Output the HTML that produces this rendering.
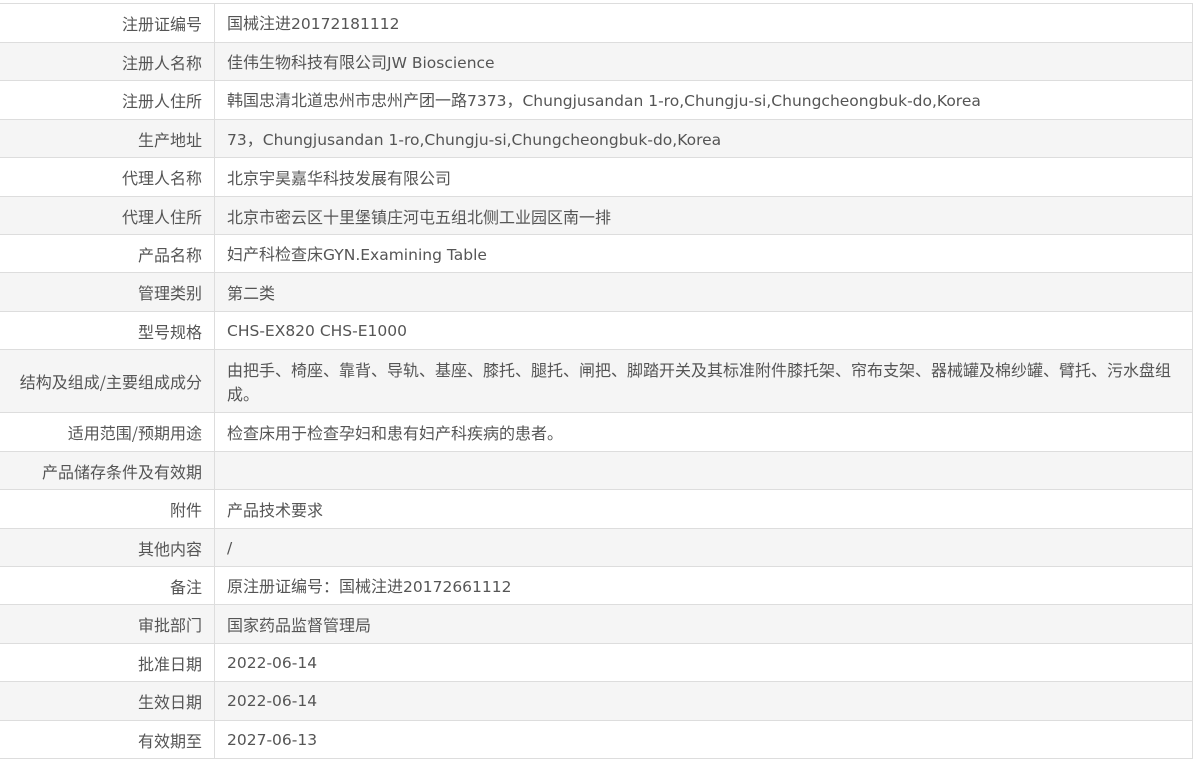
<!DOCTYPE html>
<html><head><meta charset="utf-8"><style>
body{margin:0;background:#fff;}
table{position:absolute;left:0;top:3px;width:1193px;border-collapse:collapse;font-family:"DejaVu Sans","Noto Sans CJK SC",sans-serif;font-size:15.5px;color:#555;}
td{border:1px solid #ddd;padding:0 12px;line-height:24px;}
td.l{width:190px;text-align:right;border-left:none;font-family:"Noto Sans CJK SC",sans-serif;font-size:16px;}
tr:nth-child(even){background:#f5f5f5;}
.c{font-family:"Noto Sans CJK SC",sans-serif;font-size:16px;}
</style></head><body>
<table>
<tr style="height:39px"><td class="l">注册证编号</td><td><span class="c">国械注进</span>20172181112</td></tr>
<tr style="height:38px"><td class="l">注册人名称</td><td><span class="c">佳伟生物科技有限公司</span>JW Bioscience</td></tr>
<tr style="height:39px"><td class="l">注册人住所</td><td><span class="c">韩国忠清北道忠州市忠州产团一路</span>7373<span class="c">，</span>Chungjusandan 1-ro,Chungju-si,Chungcheongbuk-do,Korea</td></tr>
<tr style="height:38px"><td class="l">生产地址</td><td>73<span class="c">，</span>Chungjusandan 1-ro,Chungju-si,Chungcheongbuk-do,Korea</td></tr>
<tr style="height:39px"><td class="l">代理人名称</td><td class="c">北京宇昊嘉华科技发展有限公司</td></tr>
<tr style="height:38px"><td class="l">代理人住所</td><td class="c">北京市密云区十里堡镇庄河屯五组北侧工业园区南一排</td></tr>
<tr style="height:38px"><td class="l">产品名称</td><td><span class="c">妇产科检查床</span>GYN.Examining Table</td></tr>
<tr style="height:39px"><td class="l">管理类别</td><td class="c">第二类</td></tr>
<tr style="height:38px"><td class="l">型号规格</td><td>CHS-EX820 CHS-E1000</td></tr>
<tr style="height:63px"><td class="l">结构及组成/主要组成成分</td><td class="c" style="padding-right:8px">由把手、椅座、靠背、导轨、基座、膝托、腿托、闸把、脚踏开关及其标准附件膝托架、帘布支架、器械罐及棉纱罐、臂托、污水盘组成。</td></tr>
<tr style="height:39px"><td class="l">适用范围/预期用途</td><td class="c">检查床用于检查孕妇和患有妇产科疾病的患者。</td></tr>
<tr style="height:38px"><td class="l">产品储存条件及有效期</td><td></td></tr>
<tr style="height:39px"><td class="l">附件</td><td class="c">产品技术要求</td></tr>
<tr style="height:38px"><td class="l">其他内容</td><td>/</td></tr>
<tr style="height:38px"><td class="l">备注</td><td><span class="c">原注册证编号：国械注进</span>20172661112</td></tr>
<tr style="height:39px"><td class="l">审批部门</td><td class="c">国家药品监督管理局</td></tr>
<tr style="height:38px"><td class="l">批准日期</td><td>2022-06-14</td></tr>
<tr style="height:39px"><td class="l">生效日期</td><td>2022-06-14</td></tr>
<tr style="height:38px"><td class="l">有效期至</td><td>2027-06-13</td></tr>
</table>
</body></html>
